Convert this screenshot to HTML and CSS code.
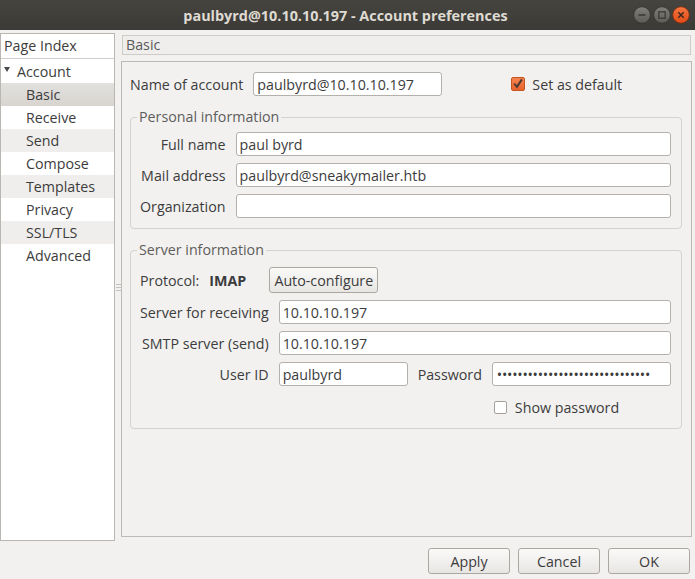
FILE: index.html
```html
<!DOCTYPE html>
<html>
<head>
<meta charset="utf-8">
<title>Account preferences</title>
<link rel="stylesheet" href="styles.css">
</head>
<body>
<header class="titlebar">
  <span></span>
  <h1 class="title">paulbyrd@10.10.10.197 - Account preferences</h1>
  <div class="wm-buttons">
    <svg class="wm" width="18" height="18" viewBox="0 0 18 18"><defs><linearGradient id="g1" x1="0" y1="0" x2="0" y2="1"><stop offset="0" stop-color="#807f7a"/><stop offset="1" stop-color="#5c5b57"/></linearGradient></defs><circle cx="9" cy="9" r="8.3" fill="url(#g1)" stroke="#35342f" stroke-width="0.8"/><path d="M5.5 9h7" stroke="#3b3a36" stroke-width="1.6"/></svg>
    <svg class="wm" width="18" height="18" viewBox="0 0 18 18"><defs><linearGradient id="g2" x1="0" y1="0" x2="0" y2="1"><stop offset="0" stop-color="#807f7a"/><stop offset="1" stop-color="#5c5b57"/></linearGradient></defs><circle cx="9" cy="9" r="8.3" fill="url(#g2)" stroke="#35342f" stroke-width="0.8"/><rect x="5.8" y="5.8" width="6.4" height="6.4" fill="none" stroke="#3b3a36" stroke-width="1.3"/></svg>
    <svg class="wm" width="18" height="18" viewBox="0 0 18 18"><defs><linearGradient id="g3" x1="0" y1="0" x2="0" y2="1"><stop offset="0" stop-color="#f7773f"/><stop offset="1" stop-color="#df4a16"/></linearGradient></defs><circle cx="9" cy="9" r="8.3" fill="url(#g3)" stroke="#7a2d10" stroke-width="0.8"/><path d="M6.3 6.3l5.4 5.4M11.7 6.3l-5.4 5.4" stroke="#3c2a22" stroke-width="1.5"/></svg>
  </div>
</header>

<div class="content">
  <aside class="sidebar">
    <div class="side-head">Page Index</div>
    <ul class="tree">
      <li class="parent"><span class="tri"></span>Account</li>
      <li class="sel">Basic</li>
      <li>Receive</li>
      <li class="alt">Send</li>
      <li>Compose</li>
      <li class="alt">Templates</li>
      <li>Privacy</li>
      <li class="alt">SSL/TLS</li>
      <li>Advanced</li>
    </ul>
  </aside>

  <div class="splitter"><span class="grip"></span></div>

  <main class="main">
    <div class="page-title">Basic</div>
    <section class="panel">
      <div class="name-row">
        <label class="lbl">Name of account</label>
        <input class="field name-field" type="text" value="paulbyrd@10.10.10.197">
        <label class="check default-check">
          <span class="box checked"><svg width="14" height="14" viewBox="0 0 14 14"><path d="M3.2 6.6l2.8 3.2 4.9-7.4" fill="none" stroke="#4a3a33" stroke-width="2"/></svg></span>
          <span>Set as default</span>
        </label>
      </div>

      <fieldset class="group personal">
        <legend>Personal information</legend>
        <div class="grid personal-grid">
          <label class="lbl">Full name</label>
          <input class="field" type="text" value="paul byrd">
          <label class="lbl">Mail address</label>
          <input class="field" type="text" value="paulbyrd@sneakymailer.htb">
          <label class="lbl">Organization</label>
          <input class="field" type="text" value="">
        </div>
      </fieldset>

      <fieldset class="group server">
        <legend>Server information</legend>
        <div class="proto-row">
          <span class="lbl">Protocol:</span>
          <strong class="proto">IMAP</strong>
          <button class="btn auto-btn">Auto-configure</button>
        </div>
        <div class="grid server-grid">
          <label class="lbl">Server for receiving</label>
          <input class="field span" type="text" value="10.10.10.197">
          <label class="lbl">SMTP server (send)</label>
          <input class="field span" type="text" value="10.10.10.197">
          <label class="lbl">User ID</label>
          <input class="field" type="text" value="paulbyrd">
          <label class="lbl">Password</label>
          <input class="field pw" type="password" value="aaaaaaaaaaaaaaaaaaaaaaaaaaaaaa">
          <label class="check show-pw">
            <span class="box"></span>
            <span>Show password</span>
          </label>
        </div>
      </fieldset>
    </section>
  </main>
</div>

<footer class="actions">
  <button class="btn">Apply</button>
  <button class="btn">Cancel</button>
  <button class="btn">OK</button>
</footer>
</body>
</html>
```

FILE: styles.css
```css
* { box-sizing: border-box; }
html, body { margin: 0; padding: 0; }
body {
  width: 695px;
  height: 579px;
  overflow: hidden;
  background: #f2f1f0;
  font-family: "Open Sans", "Noto Sans", sans-serif;
  font-size: 14.25px;
  color: #3c3c3c;
}

/* title bar */
.titlebar {
  height: 30px;
  display: grid;
  grid-template-columns: 1fr auto 1fr;
  align-items: center;
  background: linear-gradient(#45443f, #3b3a36);
}
.title {
  margin: 0 4px 0 0;
  font-size: 14.4px;
  font-weight: 700;
  color: #dfdbd2;
  white-space: nowrap;
}
.wm-buttons {
  justify-self: end;
  display: flex;
  gap: 1.5px;
  padding-right: 5px;
}
.wm { display: block; }

/* content */
.content {
  display: flex;
  align-items: flex-start;
  padding-top: 3px;
}
.sidebar {
  width: 115px;
  height: 508px;
  background: #fff;
  border: 1px solid #bab6b1;
}
.side-head {
  height: 25px;
  border-bottom: 1px solid #d2cec9;
  padding-left: 3px;
  line-height: 24px;
  background: #fff;
}
.tree {
  list-style: none;
  margin: 0;
  padding: 1px 0 0;
}
.tree li {
  height: 23px;
  line-height: 23px;
  padding-left: 25px;
}
.tree li.parent {
  padding-left: 2px;
  display: flex;
  align-items: center;
}
.tri {
  width: 0;
  height: 0;
  border-left: 3px solid transparent;
  border-right: 3px solid transparent;
  border-top: 5px solid #4a4a4a;
  margin: 0 7px 4px 1px;
}
.tree li.alt { background: #efeeec; }
.tree li.sel { background: linear-gradient(#e2e0dd, #d8d5d1); }

.splitter {
  width: 6px;
  height: 508px;
  display: flex;
  align-items: center;
  justify-content: center;
}
.grip {
  width: 5px;
  height: 7px;
  background: repeating-linear-gradient(#c4c0bb 0 1px, transparent 1px 3px);
}

.main {
  width: 571px;
  margin-top: 2px;
  display: flex;
  flex-direction: column;
  gap: 6px;
}
.page-title {
  margin: 0 1px;
  height: 20px;
  border: 1px solid #cfccc8;
  background: #efeeec;
  padding-left: 3px;
  line-height: 18px;
  color: #5a5a5a;
}
.panel {
  height: 476px;
  border: 1px solid #bdb9b4;
  padding: 10px 9px 0 8px;
}

.lbl { white-space: nowrap; }

.field {
  height: 24px;
  border: 1px solid #b4b0ab;
  border-radius: 3px;
  background: #fff;
  padding: 0 3px;
  font: inherit;
  color: #3c3c3c;
  outline: none;
  min-width: 0;
  width: 100%;
}
.pw { letter-spacing: -0.25px; padding-left: 4px; }

.name-row {
  display: flex;
  align-items: center;
  height: 24px;
}
.name-field {
  margin-left: 10px;
  width: 189px;
}
.check {
  display: flex;
  align-items: center;
  gap: 7px;
  white-space: nowrap;
}
.default-check { margin-left: 69px; }
.box {
  width: 14px;
  height: 14px;
  border: 1px solid #a4a09b;
  border-radius: 2px;
  background: #fff;
  display: flex;
}
.box.checked {
  background: linear-gradient(#f5844f, #e9622c);
  border-color: #c4551f;
}
.box svg { display: block; margin: -1px; }

.group {
  margin: 12px 0 0;
  padding: 6px 10px 9px 9px;
  border: 1px solid #d5d1cc;
  border-radius: 4px;
  min-width: 0;
}
.personal { padding-bottom: 10px; }
.group legend {
  padding: 0 2px;
  margin-left: -3px;
  line-height: 18px;
  color: #5e5d5a;
}
.grid {
  display: grid;
  align-items: center;
  column-gap: 10px;
  row-gap: 7px;
}
.grid .lbl { justify-self: end; }
.personal-grid { grid-template-columns: auto 1fr; }

.server { margin-top: 12px; padding-top: 8px; padding-bottom: 11px; }
.proto-row {
  display: flex;
  align-items: center;
  height: 26px;
  margin-bottom: 7px;
}
.proto { margin-left: 10px; font-weight: 700; }

.server-grid {
  grid-template-columns: auto 129px auto 1fr;
  column-gap: 10px;
}
.server-grid .span { grid-column: 2 / -1; }
.show-pw {
  grid-column: 4;
  margin-left: 2px;
  margin-top: 5px;
  gap: 8px;
}
.show-pw .box { width: 13px; height: 13px; }

/* buttons */
.btn {
  height: 26px;
  width: 82px;
  border: 1px solid #aca7a1;
  border-radius: 3px;
  background: linear-gradient(#fafaf9, #e8e6e3);
  font: inherit;
  color: #3c3c3c;
  padding: 0;
}
.btn.auto-btn {
  margin-left: 23px;
  width: 109px;
  height: 26px;
  white-space: nowrap;
}
.actions {
  display: flex;
  justify-content: flex-end;
  gap: 8px;
  padding: 7px 5px 0 0;
}
```
